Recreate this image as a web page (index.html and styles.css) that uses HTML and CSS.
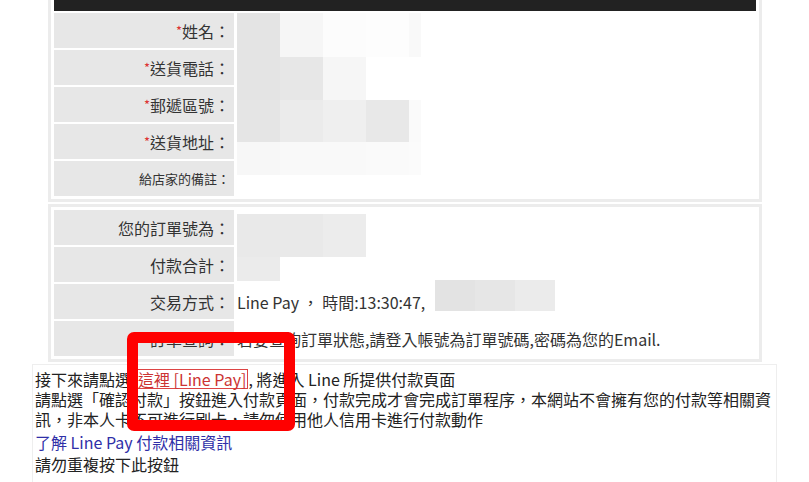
FILE: index.html
```html
<!DOCTYPE html>
<html lang="zh-Hant">
<head>
    <meta charset="UTF-8">
    <meta name="viewport" content="width=device-width, initial-scale=1.0">
    <title>訂單確認 - Line Pay</title>
    <link rel="stylesheet" href="styles.css">
</head>
<body>
    <div class="page">
        <div class="box box-top">
            <div class="head-bar"></div>
            <div class="row">
                <div class="label"><span class="req">*</span>姓名：</div>
                <div class="value">
                    <!-- blurred customer data -->
                    <div class="mosaic mosaic-buyer">
                        <i style="background:#e4e4e4"></i><i style="background:#f6f6f6"></i><i style="background:#fcfcfc"></i><i style="background:#fdfdfd"></i><i style="background:#f9f9f9"></i>
                        <i style="background:#e4e4e4"></i><i style="background:#e7e7e7"></i><i style="background:#f6f6f6"></i><i style="background:#fff"></i><i style="background:#fff"></i>
                        <i style="background:#e5e5e5"></i><i style="background:#ebebeb"></i><i style="background:#efefef"></i><i style="background:#e8e8e8"></i><i style="background:#fafafa"></i>
                        <i style="background:#f7f7f7"></i><i style="background:#f9f9f9"></i><i style="background:#f9f9f9"></i><i style="background:#fafafa"></i><i style="background:#fbfbfb"></i>
                    </div>
                </div>
            </div>
            <div class="row">
                <div class="label"><span class="req">*</span>送貨電話：</div>
                <div class="value"></div>
            </div>
            <div class="row">
                <div class="label"><span class="req">*</span>郵遞區號：</div>
                <div class="value"></div>
            </div>
            <div class="row">
                <div class="label"><span class="req">*</span>送貨地址：</div>
                <div class="value"></div>
            </div>
            <div class="row">
                <div class="label label-small">給店家的備註：</div>
                <div class="value"></div>
            </div>
        </div>

        <div class="box">
            <div class="row">
                <div class="label">您的訂單號為：</div>
                <div class="value">
                    <div class="mosaic mosaic-order">
                        <i class="wide" style="background:#e9e9e9"></i><i style="background:#ececec"></i>
                        <i class="short" style="background:#ebebeb"></i>
                    </div>
                </div>
            </div>
            <div class="row">
                <div class="label">付款合計：</div>
                <div class="value"></div>
            </div>
            <div class="row">
                <div class="label">交易方式：</div>
                <div class="value">Line Pay ， 時間:13:30:47,
                    <span class="mosaic-inline"><i style="background:#e3e3e3"></i><i style="background:#e6e6e6"></i><i style="background:#ebebeb"></i></span>
                </div>
            </div>
            <div class="row">
                <div class="label">訂單查詢：</div>
                <div class="value">若要查詢訂單狀態,請登入帳號為訂單號碼,密碼為您的Email.</div>
            </div>
        </div>

        <div class="notice">
            <p>接下來請點選<a href="#" class="pay-link">這裡 [Line Pay]</a>, 將進入 Line 所提供付款頁面<br>請點選「確認付款」按鈕進入付款頁面，付款完成才會完成訂單程序，本網站不會擁有您的付款等相關資訊，非本人卡不可進行刷卡，請勿使用他人信用卡進行付款動作</p>
            <a href="#" class="info-link">了解 Line Pay 付款相關資訊</a>
            <p class="warn">請勿重複按下此按鈕</p>
        </div>

        <div class="callout"></div>
    </div>
</body>
</html>
```

FILE: styles.css
```css
body {
    margin: 0;
    background: #fff;
    color: #2a2a2a;
    font-family: "Noto Sans CJK TC", "Noto Sans", sans-serif;
}
.page {
    position: relative;
    width: 745px;
    margin: 0 auto;
}
.box {
    width: 702px;
    margin: 2px 0 0 16px;
    padding: 3px;
    border: 3px solid #ececec;
    display: grid;
    gap: 2px;
}
.box-top {
    margin-top: 0;
    padding-top: 0;
    border-top: 0;
}
.head-bar {
    height: 11px;
    background-color: #222;
}
.row {
    display: grid;
    grid-template-columns: 180px 1fr;
    column-gap: 2px;
    height: 35px;
}
.label {
    display: flex;
    align-items: center;
    justify-content: flex-end;
    padding-right: 4px;
    background-color: #e7e7e7;
    font-size: 16px;
    line-height: 20px;
    color: #333;
}
.label-small {
    font-size: 13px;
}
.req {
    color: #d33;
    font-size: 13px;
}
.value {
    position: relative;
    display: flex;
    align-items: center;
    padding-left: 1px;
    font-size: 16px;
    line-height: 20px;
    color: #333;
    white-space: nowrap;
}
.mosaic {
    position: absolute;
    left: 1px;
    top: 0;
    display: grid;
}
.mosaic-buyer {
    grid-template-columns: 43px 43px 43px 43px 12px;
    grid-template-rows: 44px 43px 42px 33px;
}
.mosaic-order {
    top: 4px;
    grid-template-columns: 43px 43px 43px;
    grid-template-rows: 43px 24px;
}
.mosaic-order .wide {
    grid-column: span 2;
}
.mosaic-order .short {
    grid-column: 1;
}
.mosaic-inline {
    position: absolute;
    left: 199px;
    top: -4px;
    display: flex;
    height: 31px;
}
.mosaic-inline i {
    width: 40px;
}
.notice {
    margin-top: 2px;
    padding: 4px 2px 8px 2px;
    border: 1px solid #eeeeee;
    border-bottom: 0;
    font-size: 16px;
    line-height: 20px;
    color: #222;
}
.notice p {
    margin: 0;
}
.pay-link {
    display: inline-block;
    vertical-align: top;
    margin-left: 5px;
    padding: 0 1px;
    border: 1px solid #d44;
    line-height: 18px;
    color: #c33;
    text-decoration: none;
}
.info-link {
    display: block;
    margin-top: 2px;
    line-height: 22px;
    color: #2f2fa8;
    text-decoration: none;
}
.warn {
    line-height: 22px;
}
.callout {
    position: absolute;
    left: 95px;
    top: 332px;
    width: 146px;
    height: 77px;
    border: 11px solid #f00;
    border-radius: 7px;
}
```
